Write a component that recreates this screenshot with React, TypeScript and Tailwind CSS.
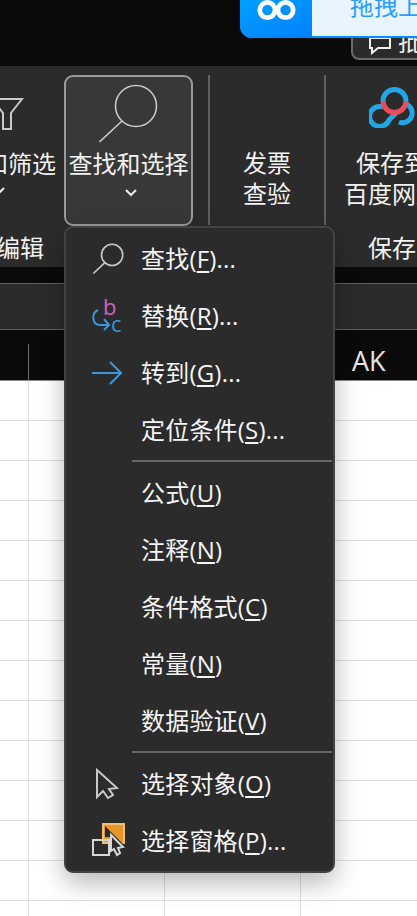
// Excel ribbon, "查找和选择" dropdown open, dark theme.
const font = "font-['Open_Sans','Noto_Sans_CJK_SC',sans-serif]";

function SearchIcon({ size }: { size: number }) {
  return (
    <svg width={size} height={size} viewBox="0 0 60 60" fill="none" stroke="#c9c9c9" strokeWidth={60 / size * 1.6}>
      <circle cx="37" cy="23" r="20.5" />
      <path d="M0.5 59 L23 38" />
    </svg>
  );
}

function ReplaceIcon() {
  return (
    <svg width="30" height="36" viewBox="0 0 30 36" fill="none" className="-ml-[4px]">
      <text x="11" y="17" fontSize="22" fill="#c964c9" fontFamily="Open Sans">b</text>
      <text x="19" y="34" fontSize="22" fill="#3a96dd" fontFamily="Open Sans">c</text>
      <path d="M6 12 C-1 15 0 27 8 27 L17 27 M12 21 L17 27 L12 32" stroke="#3a96dd" strokeWidth="2" />
    </svg>
  );
}

function ArrowIcon() {
  return (
    <svg width="30" height="24" viewBox="0 0 30 24" fill="none" stroke="#3a96dd" strokeWidth="2" className="-ml-[4px]">
      <path d="M0 12 H29 M18 1 L29 12 L18 23" />
    </svg>
  );
}

function CursorIcon() {
  return (
    <svg width="24" height="32" viewBox="0 0 24 32" fill="none" stroke="#c9c9c9" strokeWidth="2" className="-ml-[4px]">
      <path d="M2 2 V29 L8 23 L13 30 L18 27 L14 21 L22 20 Z" />
    </svg>
  );
}

function PaneIcon() {
  return (
    <svg width="34" height="34" viewBox="0 0 34 34" fill="none" className="-mt-[2px]">
      <rect x="11" y="1" width="21" height="19" fill="#e8962a" stroke="#f0c070" strokeWidth="2" />
      <rect x="1" y="17" width="16" height="15" stroke="#d6d6d6" strokeWidth="2" />
      <path d="M13 3 L32 22 L32 33 L18 33 L18 14 L13 14 Z" fill="#2b2b2b" />
      <path d="M19 12 V28 L22 26 L25 32 L28 30 L26 25 L31 24 Z" fill="#2b2b2b" stroke="#d6d6d6" strokeWidth="2" />
    </svg>
  );
}

function BaiduLogo() {
  return (
    <svg width="50" height="42" viewBox="0 0 50 42" fill="none" strokeWidth="5">
      <path d="M14 21 A10 10 0 1 0 20 34 L29 25" stroke="#22a7e6" />
      <path d="M30 36 A9.5 9.5 0 1 0 37 18" stroke="#22a7e6" />
      <path d="M14 15 A11.5 11.5 0 0 1 37 15" stroke="#22a7e6" />
      <path d="M14 15 A11.5 11.5 0 0 0 37 15" stroke="#ec4c5c" />
    </svg>
  );
}

function Chevron() {
  return (
    <svg width="14" height="10" viewBox="0 0 14 10" fill="none" stroke="#f0f0f0" strokeWidth="2">
      <path d="M2 2 L7 7 L12 2" />
    </svg>
  );
}

const menu = [
  [
    { label: "查找", key: "F", tail: "...", icon: <SearchIcon size={31} /> },
    { label: "替换", key: "R", tail: "...", icon: <ReplaceIcon /> },
    { label: "转到", key: "G", tail: "...", icon: <ArrowIcon /> },
    { label: "定位条件", key: "S", tail: "..." },
  ],
  [
    { label: "公式", key: "U" },
    { label: "注释", key: "N" },
    { label: "条件格式", key: "C" },
    { label: "常量", key: "N" },
    { label: "数据验证", key: "V" },
  ],
  [
    { label: "选择对象", key: "O", icon: <CursorIcon /> },
    { label: "选择窗格", key: "P", tail: "...", icon: <PaneIcon /> },
  ],
];

const rows = Array.from({ length: 14 });

export default function App() {
  return (
    <div className={`relative w-[417px] h-[916px] overflow-hidden bg-white flex flex-col ${font}`}>
      {/* top title band */}
      <div className="h-[66px] shrink-0 bg-[#0a0a0a] relative">
        <div className="absolute left-[351px] top-[20px] w-[90px] h-[40px] rounded-[8px] border-2 border-[#6a6a6a] bg-[#2b2b2b] flex items-end pl-[16px] pb-[1px] gap-[7px]">
          <svg width="22" height="18" viewBox="0 0 22 18" fill="none" stroke="#f0f0f0" strokeWidth="2" className="mb-[2px]">
            <path d="M1 1 H21 V11 H9 L3 16 V11 H1 Z" />
          </svg>
          <span className="text-[24px] leading-[30px] text-[#f0f0f0]">批</span>
        </div>
        <div className="absolute left-[240px] top-0 w-[177px] h-[38px] flex rounded-bl-[12px] overflow-hidden bg-[#0091ff]">
          <div className="w-[72px] h-[38px] bg-gradient-to-br from-[#00a0ff] to-[#0080ff] flex justify-center items-start">
            <svg width="42" height="22" viewBox="0 0 44 22" fill="none" stroke="white" strokeWidth="5">
              <circle cx="13" cy="10" r="8" />
              <circle cx="32" cy="10" r="8" />
            </svg>
          </div>
          <div className="flex-1 h-[36px] bg-[#e8f5ff] overflow-hidden pl-[38px]">
            <div className="-mt-[8px] text-[24px] leading-[28px] whitespace-nowrap text-[#2a9dff]">拖拽上传</div>
          </div>
        </div>
      </div>

      {/* ribbon */}
      <div className="h-[201px] shrink-0 bg-[#2b2b2b] flex flex-col overflow-hidden text-[#f2f2f2]">
        <div className="flex h-[160px] shrink-0 pt-[9px] text-[24px] leading-[31px] whitespace-nowrap">
          <div className="w-[56px] shrink-0 flex flex-col items-end overflow-hidden">
            <div className="h-[73px] w-full pt-[23px]">
              <svg width="24" height="34" viewBox="0 0 24 34" fill="none" stroke="#c9c9c9" strokeWidth="2">
                <path d="M-4 1 H22 L11 15 V31 H3 V15 L-4 6" />
              </svg>
            </div>
            <div className="w-[47px] flex justify-end text-right">和筛选</div>
            <div className="w-full pt-[7px] -ml-[1px]">
              <div className="-ml-[8px]"><Chevron /></div>
            </div>
          </div>
          <div className="ml-[8px] w-[129px] h-[151px] shrink-0 rounded-[9px] border-2 border-[#9a9a9a] bg-[#383838] flex flex-col items-center">
            <div className="h-[71px] pt-[6px] shrink-0"><SearchIcon size={60} /></div>
            <div>查找和选择</div>
            <div className="pt-[9px] pl-[4px]"><Chevron /></div>
          </div>
          <div className="ml-[15px] w-[2px] h-[150px] shrink-0 bg-[#5f5f5f]" />
          <div className="w-[114px] shrink-0 flex flex-col items-center pt-[72px]">
            <div>发票</div>
            <div>查验</div>
          </div>
          <div className="w-[2px] h-[150px] shrink-0 bg-[#5f5f5f]" />
          <div className="w-[132px] shrink-0 flex flex-col items-center">
            <div className="h-[72px] pt-[11px] pl-[4px]"><BaiduLogo /></div>
            <div>保存到</div>
            <div>百度网盘</div>
          </div>
        </div>
        <div className="relative flex-1 text-[24px] leading-[31px] whitespace-nowrap">
          <div className="flex pt-[6px]">
            <div className="w-[44px] overflow-hidden flex justify-end shrink-0">
              <span className="shrink-0">编辑</span>
            </div>
            <div className="ml-[324px] shrink-0">保存</div>
          </div>
        </div>
      </div>

      {/* gap + formula bar */}
      <div className="h-[16px] shrink-0 bg-[#0a0a0a]" />
      <div className="h-[47px] shrink-0 bg-[#2b2b2b] border-y border-[#5f5f5f]" />

      {/* column headers */}
      <div className="h-[51px] shrink-0 bg-[#0a0a0a] flex border-b border-[#8a8a8a]">
        <div className="w-[29px] shrink-0 flex justify-end pt-[14px]">
          <div className="w-[1px] h-[36px] bg-[#6a6a6a]" />
        </div>
        <div className="ml-[323px] pt-[14px] text-[27px] leading-[34px] text-[#e6e6e6]">AK</div>
      </div>

      {/* sheet */}
      <div className="flex-1 flex flex-col bg-white">
        {rows.map((_, i) => (
          <div key={i} className="h-[40px] shrink-0 flex border-b border-[#e0e0e0]">
            <div className="w-[29px] shrink-0 border-r border-[#e0e0e0]" />
            <div className="w-[136px] shrink-0 border-r border-[#e0e0e0]" />
            <div className="w-[136px] shrink-0 border-r border-[#e0e0e0]" />
          </div>
        ))}
      </div>

      {/* dropdown menu */}
      <div className="absolute left-[64px] top-[226px] w-[271px] h-[647px] rounded-[9px] border-2 border-[#434343] bg-[#2b2b2b] pt-[2px] shadow-[0_10px_26px_rgba(0,0,0,0.28)] text-[24px] text-[#f5f5f5]">
        {menu.map((group, g) => (
          <div key={g}>
            {g > 0 && (
              <div className="h-[6px] flex items-center justify-end pr-[1px]">
                <div className="w-[200px] h-[2px] bg-[#666666]" />
              </div>
            )}
            {group.map((item) => (
              <div key={item.label} className="h-[57px] flex items-center">
                <div className="w-[75px] shrink-0 flex justify-center pl-[10px]">{item.icon}</div>
                <span className="whitespace-nowrap leading-[30px] tracking-[0.2px]">
                  {item.label}(<span className="underline underline-offset-[3px] decoration-[2px]">{item.key}</span>){item.tail}
                </span>
              </div>
            ))}
          </div>
        ))}
      </div>
    </div>
  );
}
